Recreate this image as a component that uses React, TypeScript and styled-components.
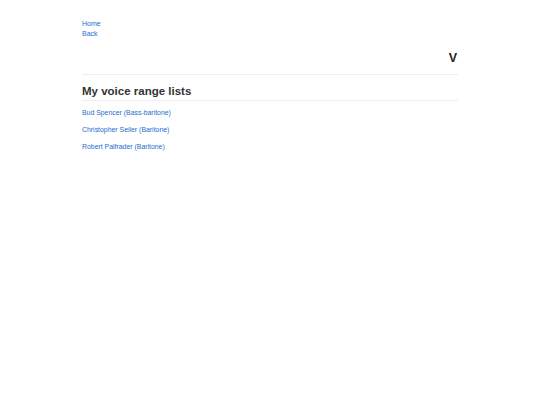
import React from 'react';
import { styled, createGlobalStyle } from 'styled-components';

const GlobalStyle = createGlobalStyle`
  html, body {
    margin: 0;
    padding: 0;
    background: #ffffff;
    font-family: "Liberation Sans", Arial, sans-serif;
    color: #333333;
  }
`;

const singers = [
  { name: 'Bud Spencer', range: 'Bass-baritone' },
  { name: 'Christopher Seiler', range: 'Baritone' },
  { name: 'Robert Palfrader', range: 'Baritone' },
];

const App = () => {
  return (
    <>
      <GlobalStyle />
      <StPage>
        <StNav>
          <StNavLink href="#">Home</StNavLink>
          <StNavLink href="#">Back</StNavLink>
        </StNav>
        <StHeader>
          <StBadge>V</StBadge>
        </StHeader>
        <StTitle>My voice range lists</StTitle>
        <StList>
          {singers.map((s) => (
            <StListLink key={s.name} href="#">
              {s.name} ({s.range})
            </StListLink>
          ))}
        </StList>
      </StPage>
    </>
  );
};

export default App;

const StPage = styled.div`
  width: 376px;
  margin: 0 auto;
  padding-top: 19px;
`;

const StNav = styled.nav`
  display: flex;
  flex-direction: column;
`;

const StNavLink = styled.a`
  font-size: 7px;
  line-height: 10px;
  color: #1a6dd0;
  text-decoration: none;
`;

const StHeader = styled.div`
  display: flex;
  justify-content: flex-end;
  margin-top: 12px;
  padding-bottom: 9px;
  border-bottom: 1px solid #eeeeee;
`;

const StBadge = styled.span`
  font-size: 12.5px;
  line-height: 14px;
  font-weight: 700;
  color: #222222;
  padding-right: 1px;
`;

const StTitle = styled.h2`
  margin: 9px 0 0;
  padding-bottom: 2px;
  font-size: 11.5px;
  line-height: 14px;
  font-weight: 700;
  color: #333333;
  border-bottom: 1px solid #eeeeee;
`;

const StList = styled.div`
  display: flex;
  flex-direction: column;
  align-items: flex-start;
  gap: 7px;
  margin-top: 7px;
`;

const StListLink = styled.a`
  font-size: 6.9px;
  line-height: 10px;
  color: #1a6dd0;
  text-decoration: none;
`;
